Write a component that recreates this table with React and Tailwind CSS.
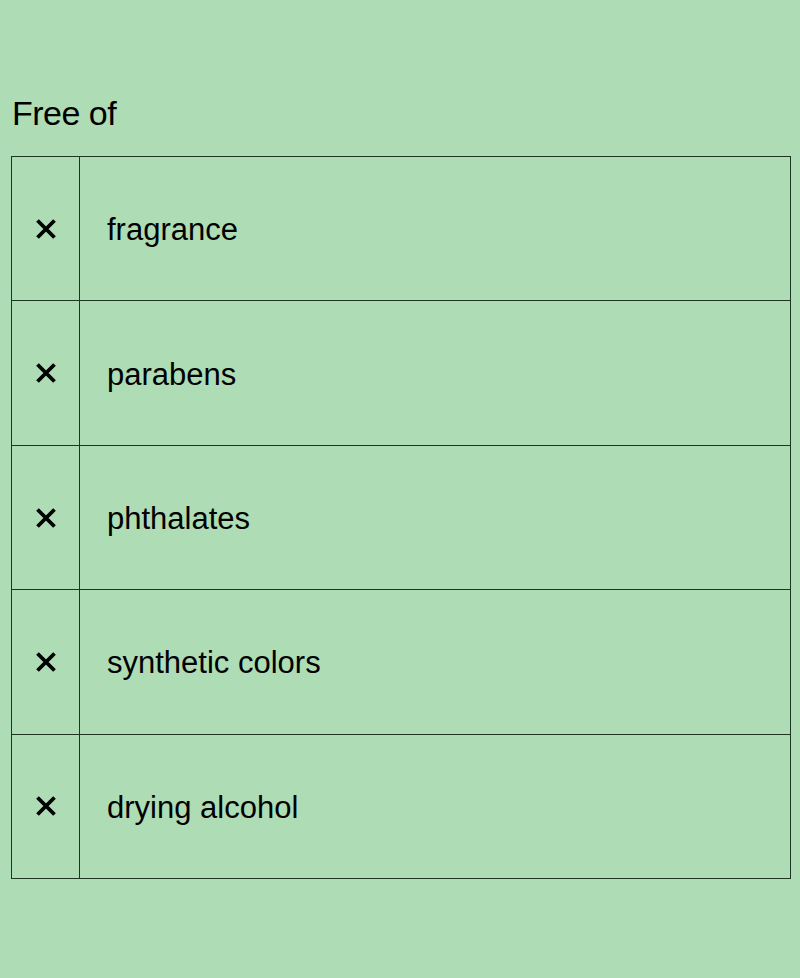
const items = ['fragrance', 'parabens', 'phthalates', 'synthetic colors', 'drying alcohol'];

function Cross() {
  return (
    <svg width="22" height="22" viewBox="0 0 22 22" className="block">
      <path d="M2.5 2.5 L19.5 19.5 M19.5 2.5 L2.5 19.5" stroke="#000" strokeWidth="3.8" strokeLinecap="butt" />
    </svg>
  );
}

export default function App() {
  return (
    <div className="min-h-[978px] w-full bg-[#aedcb5] text-black font-['Liberation_Sans',Arial,sans-serif]">
      <div className="pt-[93px] pl-[12px]">
        <h2 className="text-[34px] leading-[40px] tracking-[-0.5px]">Free of</h2>
      </div>
      <div className="mt-[23px] ml-[11px] w-[780px] h-[723px] flex flex-col border border-[#1d3522]">
        {items.map((item, i) => (
          <div
            key={item}
            className={`flex flex-1 ${i > 0 ? 'border-t border-[#1d3522]' : ''}`}
          >
            <div className="w-[68px] flex items-center justify-center border-r border-[#1d3522]">
              <Cross />
            </div>
            <div className="flex items-center pl-[27px] pt-[2px] text-[31px] leading-none">{item}</div>
          </div>
        ))}
      </div>
    </div>
  );
}
